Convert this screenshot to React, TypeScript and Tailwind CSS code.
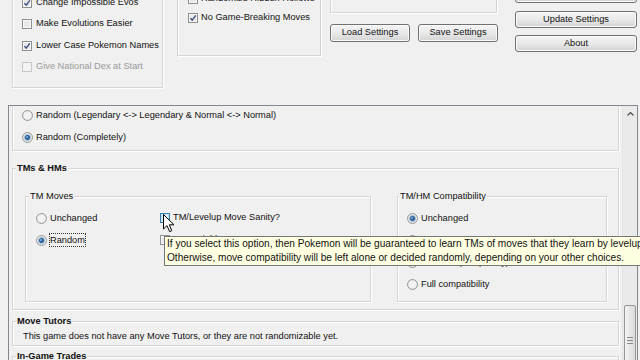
import React from 'react';

const etched = 'border border-[#d5d5d5] shadow-[inset_1px_1px_0_#ffffff,1px_1px_0_#ffffff]';
const legendCls = 'bg-[#f0f0f0] leading-[12px]';

function Check({ checked = false, disabled = false, hover = false }: { checked?: boolean; disabled?: boolean; hover?: boolean }) {
  const stroke = hover ? '#3c7fb1' : disabled ? '#c8c8c8' : '#8e8f8f';
  const fill = hover ? '#e3f3fc' : disabled ? '#f4f4f4' : '#e8e8e8';
  const inner = hover ? '#c2e3f5' : disabled ? '#f2f2f2' : '#fafafa';
  return (
    <svg width="10" height="10" viewBox="0 0 10 10" className="shrink-0">
      <rect x="0.5" y="0.5" width="9" height="9" fill={fill} stroke={stroke} />
      <rect x="1.5" y="1.5" width="7" height="7" fill="none" stroke={inner} />
      {checked && <path d="M2.4 5.1 L4.2 7.2 L7.8 2.4" fill="none" stroke="#3d4f80" strokeWidth="1.4" />}
    </svg>
  );
}

function Radio({ checked = false }: { checked?: boolean }) {
  return (
    <svg width="11" height="11" viewBox="0 0 11 11" className="shrink-0">
      <circle cx="5.5" cy="5.5" r="5" fill="#e2e2e2" stroke="#9a9a9a" />
      <circle cx="5.5" cy="5.5" r="3.8" fill="#f3f3f3" />
      {checked && (
        <>
          <circle cx="5.5" cy="5.5" r="3" fill="#2f5f97" stroke="#a9c5e2" strokeWidth="0.8" />
          <circle cx="5" cy="5" r="1" fill="#8db3dc" />
        </>
      )}
    </svg>
  );
}

function CheckRow({ label, checked, disabled, hover, h, gap = 'gap-[3px]' }: { label: string; checked?: boolean; disabled?: boolean; hover?: boolean; h: string; gap?: string }) {
  return (
    <div className={`flex items-center whitespace-nowrap ${h} ${gap}`}>
      <Check checked={checked} disabled={disabled} hover={hover} />
      <span className={disabled ? 'text-[#9a9a9a]' : ''}>{label}</span>
    </div>
  );
}

function RadioRow({ label, checked, focus }: { label: string; checked?: boolean; focus?: boolean }) {
  return (
    <div className="flex h-[22px] items-center gap-[2px] whitespace-nowrap">
      <Radio checked={checked} />
      <span className={`border leading-[12px] ${focus ? 'border-dotted border-[#333]' : 'border-transparent'}`}>{label}</span>
    </div>
  );
}

function Button({ label, w }: { label: string; w: string }) {
  return (
    <div className={`flex h-[17px] items-center justify-center rounded-[3px] border border-[#707070] bg-linear-to-b from-[#f4f4f4] via-[#e9e9e9] to-[#d4d4d4] shadow-[inset_0_0_0_1px_#fbfbfb] ${w}`}>
      {label}
    </div>
  );
}

export default function App() {
  return (
    <div className="relative h-[360px] w-[640px] overflow-hidden bg-[#f0f0f0] font-['Liberation_Sans',Arial,sans-serif] text-[9.25px] text-[#111]">
      {/* top options, scrolled partly out of view */}
      <div className="h-[105px] overflow-hidden">
        <div className="-mt-[40px] flex items-start">
          <div className={`ml-[12px] w-[151px] pl-[9px] pt-[31px] pb-[9px] ${etched}`}>
            <CheckRow h="h-[21.5px]" gap="gap-[4px]" label="Change Impossible Evos" checked />
            <CheckRow h="h-[21.5px]" gap="gap-[4px]" label="Make Evolutions Easier" />
            <CheckRow h="h-[21.5px]" gap="gap-[4px]" label="Lower Case Pokemon Names" checked />
            <CheckRow h="h-[21.5px]" gap="gap-[4px]" label="Give National Dex at Start" disabled />
          </div>

          <div className={`ml-[14px] w-[144px] pl-[10px] pt-[28.5px] pb-[27.5px] ${etched}`}>
            <CheckRow h="h-[19px]" label="Randomize Hidden Hollows" />
            <CheckRow h="h-[19px]" label="No Game-Breaking Moves" checked />
          </div>

          <div className="ml-[9px] flex w-[168px] flex-col">
            <div className={`h-[53px] w-[167px] ${etched}`} />
            <div className="mt-[11px] flex gap-[8px]">
              <Button label="Load Settings" w="w-[80px] h-[18px]" />
              <Button label="Save Settings" w="w-[80px] h-[18px]" />
            </div>
          </div>

          <div className="ml-[17px] mt-[26px] flex w-[122px] flex-col">
            <Button label="Randomize (Save)" w="w-[122px]" />
            <div className="mt-[8px]">
              <Button label="Update Settings" w="w-[122px]" />
            </div>
            <div className="mt-[7px]">
              <Button label="About" w="w-[122px]" />
            </div>
          </div>
        </div>
      </div>

      {/* scrolling options panel */}
      <div className="ml-[8px] flex h-[280px] w-[630px] border border-[#828790]">
        <div className="flex-1 overflow-hidden">
          <div className={`mx-[3px] -mt-[26px] pl-[9px] pt-[1px] pb-[2px] ${etched}`}>
            <RadioRow label="Unchanged" />
            <RadioRow label="Random (Legendary <-> Legendary & Normal <-> Normal)" />
            <RadioRow label="Random (Completely)" checked />
          </div>

          <fieldset className={`mx-[3px] mt-[11px] pb-[7px] ${etched}`}>
            <legend className={`ml-[3px] px-[1px] font-bold ${legendCls}`}>TMs &amp; HMs</legend>
            <div className="mt-[16px] flex items-stretch">
              <fieldset className={`ml-[12px] w-[346px] pl-[10px] pt-[5px] ${etched}`}>
                <legend className={`-ml-[7px] px-[1px] ${legendCls}`}>TM Moves</legend>
                <div className="flex">
                  <div className="w-[124px]">
                    <RadioRow label="Unchanged" />
                    <RadioRow label="Random" checked focus />
                  </div>
                  <div>
                    <CheckRow h="h-[22px]" label="TM/Levelup Move Sanity?" hover />
                    <CheckRow h="h-[22px]" label="Keep Field Move TMs" />
                  </div>
                </div>
              </fieldset>

              <fieldset className={`ml-[26px] w-[210px] pl-[9px] pt-[5px] pb-[6px] ${etched}`}>
                <legend className={`-ml-[8px] px-[1px] ${legendCls}`}>TM/HM Compatibility</legend>
                <RadioRow label="Unchanged" checked />
                <RadioRow label="Random (prefer same type)" />
                <RadioRow label="Random (completely)" />
                <RadioRow label="Full compatibility" />
              </fieldset>
            </div>
          </fieldset>

          <fieldset className={`mx-[3px] mt-[5px] pl-[10px] pt-[3px] pb-[3px] ${etched}`}>
            <legend className={`-ml-[7px] px-[1px] font-bold ${legendCls}`}>Move Tutors</legend>
            <div className="leading-[12px]">This game does not have any Move Tutors, or they are not randomizable yet.</div>
          </fieldset>

          <fieldset className={`mx-[3px] mt-[4px] h-[40px] ${etched}`}>
            <legend className={`ml-[3px] px-[1px] font-bold ${legendCls}`}>In-Game Trades</legend>
          </fieldset>
        </div>

        <div className="flex w-[15px] flex-col border-l border-[#e3e3e3] bg-[#eaeaea]">
          <div className="flex h-[16px] items-center justify-center">
            <svg width="7" height="4" viewBox="0 0 7 4">
              <path d="M0.5 3.5 L3.5 0.5 L6.5 3.5" fill="none" stroke="#4d4d4d" strokeWidth="1.2" />
            </svg>
          </div>
          <div className="h-[183px]" />
          <div className="mx-[1px] flex h-[70px] flex-col items-center justify-center gap-[2px] rounded-[2px] border border-[#979797] bg-linear-to-r from-[#f4f4f4] to-[#d9d9d9]">
            <div className="h-px w-[6px] bg-[#8a8a8a]" />
            <div className="h-px w-[6px] bg-[#8a8a8a]" />
            <div className="h-px w-[6px] bg-[#8a8a8a]" />
          </div>
        </div>
      </div>

      {/* tooltip over the panel */}
      <div className="absolute left-[164px] top-[236px] h-[30px] whitespace-nowrap border border-[#767676] bg-[#ffffe1] pl-[2px] pr-[6px] text-[10.1px] leading-[14px] text-[#111]">
        <div>If you select this option, then Pokemon will be guaranteed to learn TMs of moves that they learn by levelup</div>
        <div>Otherwise, move compatibility will be left alone or decided randomly, depending on your other choices.</div>
      </div>

      {/* mouse pointer */}
      <svg className="absolute left-[163px] top-[214px]" width="12" height="19" viewBox="0 0 12 19">
        <path d="M0.5 0.5 L0.5 15 L4 11.6 L6.6 17.6 L8.8 16.7 L6.3 10.8 L11 10.8 Z" fill="#ffffff" stroke="#000000" strokeWidth="1" strokeLinejoin="round" />
      </svg>
    </div>
  );
}
